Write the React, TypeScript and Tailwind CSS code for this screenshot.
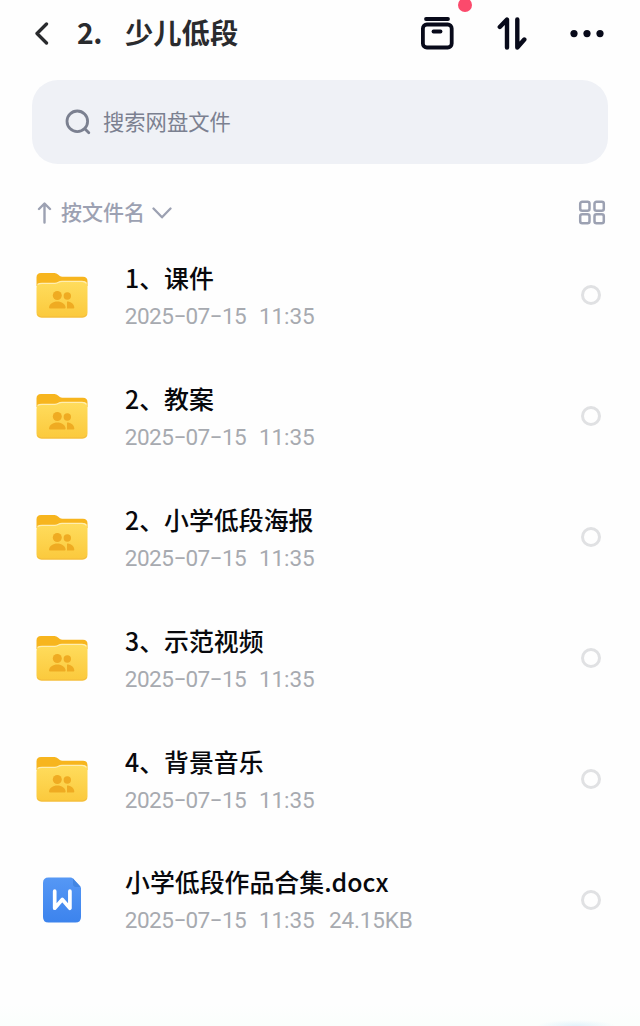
import React, { useState } from "react";

type FileItem = {
  name: string;
  date: string;
  time: string;
  size?: string;
  type: "folder" | "doc";
}

const files: FileItem[] = [
  { name: "1、课件", date: "2025-07-15", time: "11:35", type: "folder" },
  { name: "2、教案", date: "2025-07-15", time: "11:35", type: "folder" },
  { name: "2、小学低段海报", date: "2025-07-15", time: "11:35", type: "folder" },
  { name: "3、示范视频", date: "2025-07-15", time: "11:35", type: "folder" },
  { name: "4、背景音乐", date: "2025-07-15", time: "11:35", type: "folder" },
  { name: "小学低段作品合集.docx", date: "2025-07-15", time: "11:35", size: "24.15KB", type: "doc" },
]

const FolderIcon = () => (
  <svg width="52" height="46" viewBox="0 0 52 46" fill="none">
    <defs>
      <linearGradient id="folderFront" x1="0" y1="8" x2="0" y2="46" gradientUnits="userSpaceOnUse">
        <stop stopColor="#ffdd5e" />
        <stop offset="1" stopColor="#fbc93c" />
      </linearGradient>
    </defs>
    <path d="M.5 13V5.500Q.5 1 5 1h13.500q2 0 3.500 1.500l1.500 1.300q1.300 1 3 1H47q4.500 0 4.500 4.500V14H.5z" fill="#f7b51e" />
    <path d="M.5 16q0-5 4.500-5H19q2 0 3.500-1t3.500-1h21q4.500 0 4.500 5v26.500q0 5-5 5h-41q-5 0-5-5z" fill="url(#folderFront)" />
    <path d="M1.500 12.500Q3 11.300 6 11.300h13q2 0 3.500-1T26 9.300h20q3 0 4.500 2" stroke="#ffeeb0" strokeWidth="1.300" />
    <path d="M1.500 42.500q1.500 2.500 4 2.500h41q2.500 0 4-2.500" stroke="#f3ba3c" strokeWidth="1" />
    <g fill="#efab22">
      <circle cx="31.300" cy="24" r="3.700" />
      <path d="M31 29.500c4 0 7 2.500 7.300 6q0 1-1 1H31z" />
      <circle cx="21.300" cy="23.500" r="4.500" />
      <path d="M13 35.500c.3-3.500 4-6 8.300-6s8 2.500 8.300 6q0 1-1 1H14q-1 0-1-1z" />
    </g>
  </svg>
)

const DocIcon = () => (
  <svg width="40" height="46" viewBox="0 0 40 46" fill="none">
    <defs>
      <linearGradient id="docBody" x1="0" y1="0" x2="0" y2="46" gradientUnits="userSpaceOnUse">
        <stop stopColor="#5698f5" />
        <stop offset="1" stopColor="#3c83ed" />
      </linearGradient>
    </defs>
    <path d="M1 6q0-5.500 5.500-5.500h22q1.500 0 2.500 1l7 7.500q1 1 1 2.500V40q0 5.500-5.500 5.500h-27Q1 45.500 1 40z" fill="url(#docBody)" />
    <path d="M31 1.500l7.500 8.500h-4.500q-3 0-3-3z" fill="#4386e2" />
    <path d="M12.700 14.200v17l7.600-8.700 7.600 8.700v-17" stroke="#fff" strokeWidth="3.700" strokeLinecap="round" strokeLinejoin="round" />
  </svg>
)

const Header = () => (
  <header className="flex h-[67px] shrink-0 items-center text-[#2a2b2e]">
    <svg className="ml-[34px]" width="16" height="24" viewBox="0 0 16 24" fill="none" stroke="currentColor" strokeWidth="3.300" strokeLinecap="round" strokeLinejoin="round">
      <path d="M12.500 2L3 11.500l9.500 9.500" />
    </svg>
    <h1 className="mb-[3px] ml-[27px] flex text-[28.300px] leading-10 font-bold">
      <span className="w-12 tracking-[-0.500px]">2.</span>
      <span>少儿低段</span>
    </h1>
    <div className="mr-[36px] ml-auto flex items-center text-[#080a1a]">
      <button className="relative">
        <svg width="34" height="36" viewBox="0 0 34 36" fill="none" stroke="currentColor" strokeWidth="3.800" strokeLinecap="round">
          <path d="M6 3h22" />
          <rect x="2.900" y="8.500" width="28.800" height="23" rx="4" />
          <path d="M13.500 15.500h7" />
        </svg>
        <span className="absolute -top-[18px] left-[38px] size-[14px] rounded-full bg-[#fb4a6c]" />
      </button>
      <button className="ml-[43px]">
        <svg width="30" height="36" viewBox="0 0 30 36" fill="none" stroke="currentColor" strokeWidth="4.400" strokeLinecap="round" strokeLinejoin="round">
          <path d="M2.800 11l7.200-7.500v28" />
          <path d="M20.300 3.500v28l7-8" />
        </svg>
      </button>
      <button className="ml-[43px]">
        <svg width="34" height="8" viewBox="0 0 34 8" fill="currentColor">
          <circle cx="4" cy="3.600" r="3.600" />
          <circle cx="17" cy="3.600" r="3.600" />
          <circle cx="30" cy="3.600" r="3.600" />
        </svg>
      </button>
    </div>
  </header>
)

const SearchBar = () => (
  <div className="mx-8 mt-[13px] flex h-[84px] shrink-0 items-center rounded-[26px] bg-[#eff1f6] pl-[33px] text-[#7b8090]">
    <svg width="26" height="26" viewBox="0 0 26 26" fill="none" stroke="currentColor" strokeWidth="2.800" strokeLinecap="round">
      <circle cx="12.300" cy="12.300" r="10.300" />
      <path d="M19.800 19.800l4 4" />
    </svg>
    <span className="mb-[2px] ml-3 text-[21.300px]">搜索网盘文件</span>
  </div>
)

const SortBar = () => (
  <div className="flex h-[71px] shrink-0 items-center pt-[26px] pr-[34px] pl-[37px] text-[#9ca1b2]">
    <svg width="15" height="22" viewBox="0 0 15 22" fill="none" stroke="currentColor" strokeWidth="2.400" strokeLinecap="round" strokeLinejoin="round">
      <path d="M2 7l5.500-5.500L13 7M7.500 2v18.500" />
    </svg>
    <span className="mb-px ml-[9px] text-[21px] font-medium">按文件名</span>
    <svg className="ml-[7px]" width="20" height="12" viewBox="0 0 20 12" fill="none" stroke="currentColor" strokeWidth="2.300" strokeLinecap="round" strokeLinejoin="round">
      <path d="M1.500 1.500L10 10.300l8.500-8.800" />
    </svg>
    <svg className="ml-auto" width="28" height="26" viewBox="0 0 28 26" fill="none" stroke="currentColor" strokeWidth="2.500">
      <rect x="2.200" y="1.700" width="9.300" height="9" rx="2" />
      <rect x="16.500" y="1.700" width="9.300" height="9" rx="2" />
      <rect x="2.200" y="14.300" width="9.300" height="9" rx="2" />
      <rect x="16.500" y="14.300" width="9.300" height="9" rx="2" />
    </svg>
  </div>
)

// hyphens are stretched so they take the same width as a digit
const FileDate = ({ value }: { value: string }) => (
  <span className="flex w-[134px]">
    {value.split("").map((char, i) => (
      <span key={i} className={`flex w-[12.150px] justify-center ${char === "-" ? "-translate-y-px scale-x-170" : ""}`}>{char}</span>
    ))}
  </span>
)

const FileRow = ({ file, selected, onSelect }: { file: FileItem; selected: boolean; onSelect: () => void }) => (
  <li className="flex h-[120.900px] items-center pr-[39px] pl-9">
    <div className="flex w-[52px] justify-center">
      {file.type === "folder" ? <FolderIcon /> : <DocIcon />}
    </div>
    <div className="ml-[37px] pt-[5px]">
      <p className="text-[24.900px] leading-[37px] font-medium text-[#08090d]">{file.name}</p>
      <p className="flex font-[Roboto,'Noto_Sans_CJK_SC',sans-serif] text-[22.500px] leading-[41px] text-[#a7aab0]">
        <FileDate value={file.date} />
        <span className="w-[70px] tracking-[-0.100px]">{file.time}</span>
        {file.size && <span className="tracking-[-0.150px]">{file.size}</span>}
      </p>
    </div>
    <button
      onClick={onSelect}
      className={`ml-auto size-5 rounded-full border-[3px] border-[#e0e1e3] ${selected ? "bg-blue-500" : ""}`}
    />
  </li>
)

const App = () => {
  const [selected, setSelected] = useState<number | null>(null)

  return (
    <div className="flex h-[1026px] w-full flex-col overflow-hidden bg-[#fefefe] font-['Noto_Sans_CJK_SC',sans-serif]">
      <Header />
      <SearchBar />
      <SortBar />
      <ul>
        {files.map((file, i) => (
          <FileRow
            key={i}
            file={file}
            selected={selected === i}
            onSelect={() => setSelected(prev => prev === i ? null : i)}
          />
        ))}
      </ul>
      <div className="mt-auto flex h-[22px] items-end justify-end bg-gradient-to-b from-[#fefefe] to-[#fafefc]">
        <div className="mr-6 h-1.5 w-20 bg-radial-[at_50%_100%] from-[#e2f3fb] to-transparent to-70%" />
      </div>
    </div>
  )
}

export default App
